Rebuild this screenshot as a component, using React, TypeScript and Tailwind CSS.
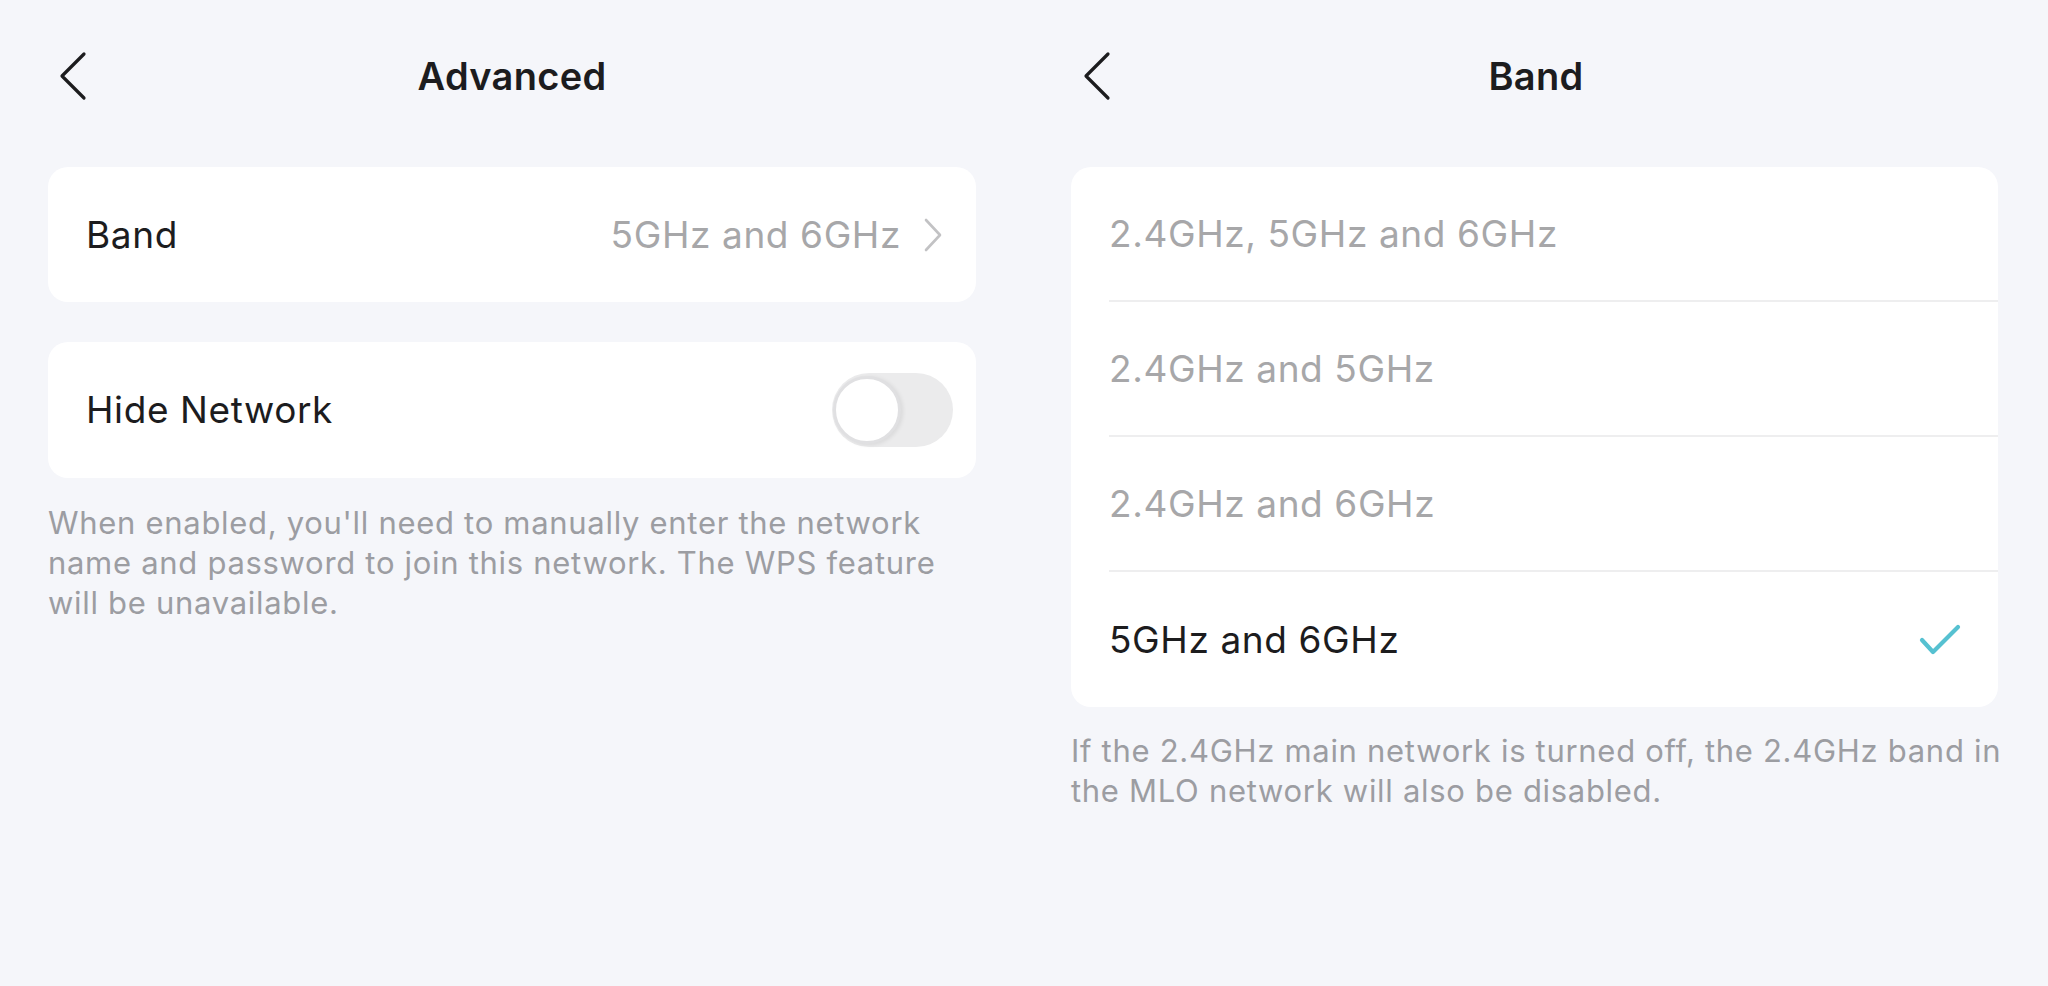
import React from 'react';

const font = { fontFamily: 'Inter, "Noto Sans", sans-serif' };

const BackIcon = () => (
  <svg width="30" height="50" viewBox="0 0 30 50" fill="none">
    <path d="M26 3 L4 25 L26 47" stroke="#1c1c1e" strokeWidth="3.2" strokeLinecap="round" strokeLinejoin="round" />
  </svg>
);

const Header = ({ title }: { title: string }) => (
  <div className="grid grid-cols-[1fr_auto_1fr] items-center h-[152px]">
    <div className="flex items-center pl-[58px]">
      <BackIcon />
    </div>
    <h1 className="text-[38px] font-semibold text-[#1c1c1e] tracking-[0.3px]">{title}</h1>
    <div />
  </div>
);

const Toggle = ({ on = false }: { on?: boolean }) => (
  <div className={`w-[121px] h-[74px] rounded-full p-[4px] flex items-center ${on ? 'bg-[#4fc3d0] justify-end' : 'bg-[#ebebec] justify-start'}`}>
    <div className="w-[68px] h-[68px] -ml-[3px] rounded-full bg-white border-[3px] border-[#e0e0e2] shadow-[2px_1px_4px_rgba(0,0,0,0.08)]" />
  </div>
);

const bands = ['2.4GHz, 5GHz and 6GHz', '2.4GHz and 5GHz', '2.4GHz and 6GHz', '5GHz and 6GHz'];

export default function App() {
  const selected = '5GHz and 6GHz';

  return (
    <div className="w-[2048px] h-[986px] bg-[#f5f6fa] flex" style={font}>
      {/* Advanced */}
      <div className="w-[1024px] flex flex-col">
        <Header title="Advanced" />
        <div className="px-12 pt-[15px] flex flex-col">
          <div className="h-[135px] bg-white rounded-[20px] flex items-center justify-between pl-[38px] pr-[33px]">
            <span className="text-[37px] tracking-[0.6px] text-[#1c1c1e]">Band</span>
            <div className="flex items-center gap-[22px]">
              <span className="text-[37px] tracking-[0.6px] text-[#a7a7a9]">5GHz and 6GHz</span>
              <svg width="20" height="34" viewBox="0 0 20 34" fill="none">
                <path d="M3 2 L17 17 L3 32" stroke="#c2c2c4" strokeWidth="2.6" strokeLinecap="round" strokeLinejoin="round" />
              </svg>
            </div>
          </div>
          <div className="mt-[40px] h-[136px] bg-white rounded-[20px] flex items-center justify-between pl-[38px] pr-[23px]">
            <span className="text-[37px] tracking-[0.6px] text-[#1c1c1e]">Hide Network</span>
            <Toggle />
          </div>
          <p className="mt-[25px] text-[31px] leading-[40px] tracking-[0.7px] text-[#9c9da2]">
            When enabled, you'll need to manually enter the network name and password to join this network. The WPS feature will be unavailable.
          </p>
        </div>
      </div>

      {/* Band */}
      <div className="w-[1024px] flex flex-col">
        <Header title="Band" />
        <div className="pl-[47px] pr-[50px] pt-[15px] flex flex-col">
          <div className="bg-white rounded-[20px] overflow-hidden">
            {bands.map((b, i) => {
              const active = b === selected;
              return (
                <div key={b} className="pl-[38px]">
                  <div className={`h-[135px] flex items-center justify-between pr-[36px] ${i < bands.length - 1 ? 'border-b-2 border-[#eeeeef]' : ''}`}>
                    <span className={`text-[37px] tracking-[0.6px] ${active ? 'text-[#1c1c1e]' : 'text-[#a7a7a9]'}`}>{b}</span>
                    {active && (
                      <svg width="44" height="34" viewBox="0 0 44 34" fill="none">
                        <path d="M4 17 L15 29 L40 4" stroke="#56c1d1" strokeWidth="4.2" strokeLinecap="round" strokeLinejoin="round" />
                      </svg>
                    )}
                  </div>
                </div>
              );
            })}
          </div>
          <p className="mt-[24px] w-[950px] text-[31px] leading-[40px] tracking-[0.7px] text-[#9c9da2]">
            If the 2.4GHz main network is turned off, the 2.4GHz band in the MLO network will also be disabled.
          </p>
        </div>
      </div>
    </div>
  );
}
